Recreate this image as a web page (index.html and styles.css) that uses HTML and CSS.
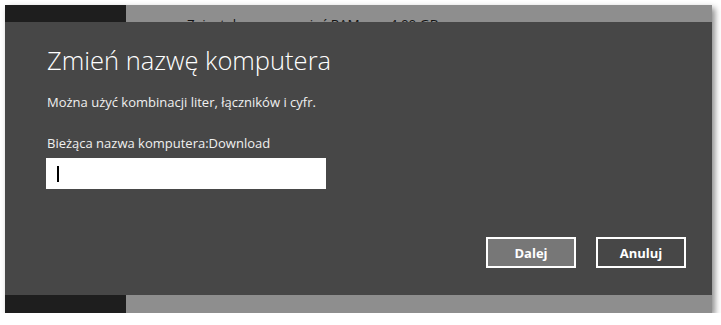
FILE: index.html
```html
<!DOCTYPE html>
<html lang="pl">

<head>
  <meta charset="UTF-8">
  <meta name="viewport" content="width=device-width, initial-scale=1.0">
  <title>Zmień nazwę komputera</title>
  <link rel="stylesheet" href="styles.css">
</head>

<body>
  <div class="window">
    <div class="strip top">
      <div class="side"></div>
      <div class="main">
        <span class="info-label">Zainstalowana pamięć RAM</span>
        <span class="info-value">4,00 GB</span>
      </div>
    </div>

    <!-- okno dialogowe -->
    <div class="dialog">
      <h1>Zmień nazwę komputera</h1>
      <p class="hint">Można użyć kombinacji liter, łączników i cyfr.</p>
      <p class="current">Bieżąca nazwa komputera:Download</p>
      <div class="name-input"><span class="caret"></span></div>
      <div class="actions">
        <button class="btn btn-next">Dalej</button>
        <button class="btn btn-cancel">Anuluj</button>
      </div>
    </div>

    <div class="strip bottom">
      <div class="side"></div>
      <div class="main"></div>
    </div>
  </div>
</body>

</html>
```

FILE: styles.css
```css
body {
  margin: 0;
  padding: 0;
  background-color: #fff;
  font-family: "Open Sans", "Noto Sans", sans-serif;
}

.window {
  margin: 5px 0 0 5px;
  width: 707px;
  height: 308px;
  display: flex;
  flex-direction: column;
  box-shadow: 3px 3px 6px rgba(0, 0, 0, 0.45);
}

.strip {
  display: flex;
}

.strip.top {
  height: 17px;
  overflow: hidden;
}

.strip.bottom {
  height: 18px;
}

.side {
  width: 121px;
  background-color: #1e1e1e;
}

.main {
  flex: 1;
  background-color: #8e8e8e;
  display: flex;
  padding: 9px 0 0 61px;
  font-size: 13.5px;
  line-height: 20px;
  color: #111;
}

.info-value {
  margin-left: 30px;
}

.dialog {
  height: 273px;
  background-color: #474747;
  padding: 0 0 0 42px;
  box-sizing: border-box;
  color: #fff;
  display: flex;
  flex-direction: column;
}

h1 {
  margin: 21px 0 0 0;
  font-size: 25.5px;
  font-weight: 300;
  line-height: 34px;
}

p {
  margin: 0;
  font-size: 13px;
  line-height: 18px;
  color: #f0f0f0;
}

.hint {
  margin-top: 16px;
}

.current {
  margin-top: 23px;
}

.name-input {
  margin-top: 6px;
  margin-left: -1px;
  width: 280px;
  height: 31px;
  background-color: #fff;
  display: flex;
  align-items: center;
}

.caret {
  margin-left: 11px;
  width: 2px;
  height: 16px;
  background-color: #000;
}

.actions {
  display: flex;
  justify-content: flex-end;
  gap: 20px;
  margin-top: 48px;
  padding-right: 26px;
}

.btn {
  width: 90px;
  height: 31px;
  border: 2px solid #fff;
  color: #fff;
  font-family: "Open Sans", "Noto Sans", sans-serif;
  font-size: 13px;
  font-weight: 700;
  padding: 0;
}

.btn-next {
  background-color: #777;
}

.btn-cancel {
  background-color: #474747;
}
```
